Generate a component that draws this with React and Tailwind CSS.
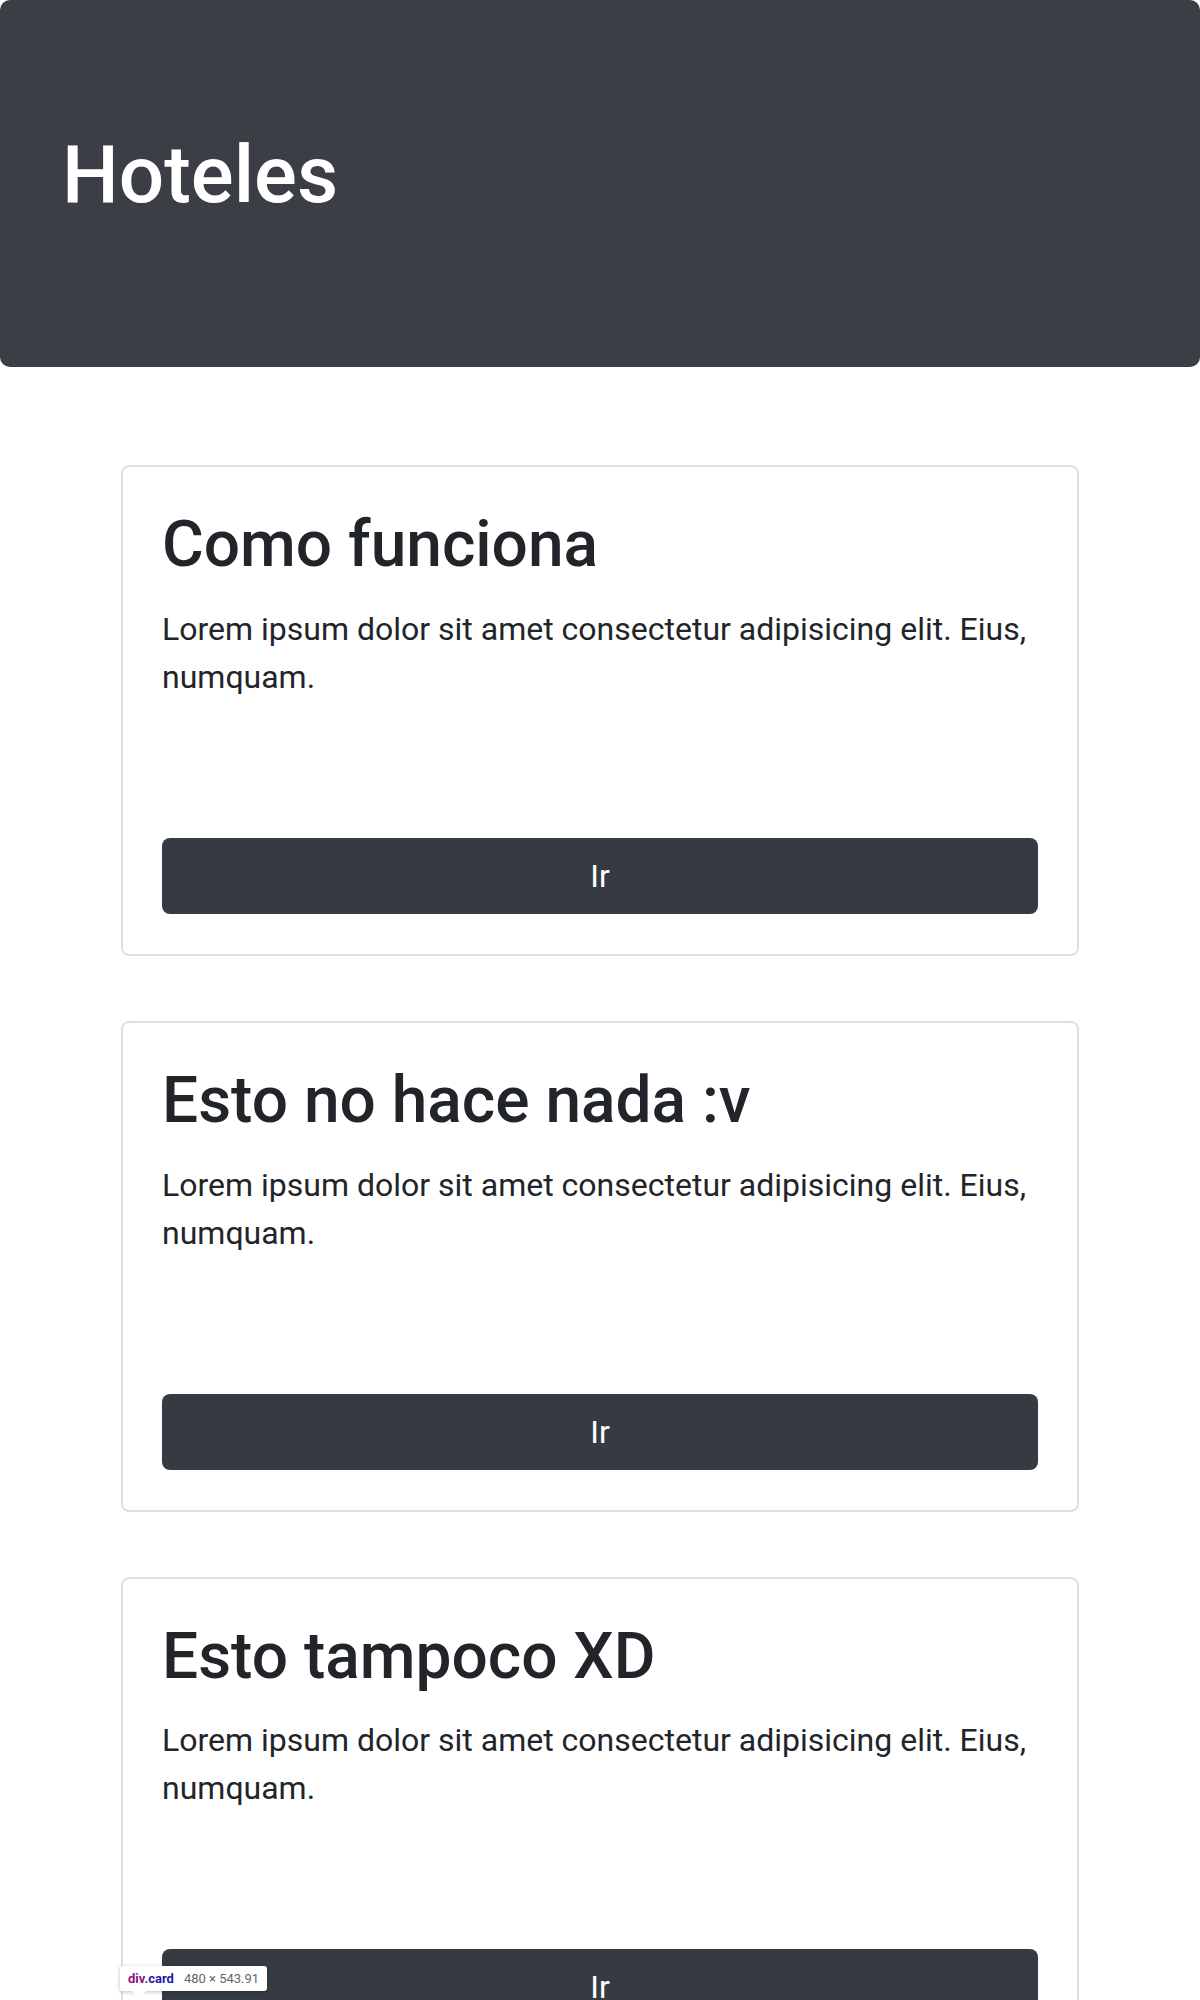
import React from "react";

const cards = [
  "Como funciona",
  "Esto no hace nada :v",
  "Esto tampoco XD",
];

function Card({ title }) {
  return (
    <div className="rounded-[8px] border-2 border-[#dfdfdf] bg-white px-[39px] py-[40px]">
      <h2 className="mb-[21px] text-[64px] font-medium leading-[76.8px] text-[#212529]">
        {title}
      </h2>
      <p className="text-[32px] leading-[48px] text-[#212529]">
        Lorem ipsum dolor sit amet consectetur adipisicing elit. Eius, numquam.
      </p>
      <button className="mt-[137px] flex h-[76px] w-full items-center justify-center rounded-[8px] bg-[#363a42] text-[32px] leading-[48px] text-white">
        Ir
      </button>
    </div>
  );
}

export default function App() {
  return (
    <div className="relative h-[2000px] overflow-hidden bg-white font-['Roboto','Liberation_Sans',sans-serif]">
      <header className="h-[367px] rounded-[10px] bg-[#3b3e44] px-[62px] pt-[127px]">
        <h1 className="text-[80px] font-medium leading-[96px] text-white">Hoteles</h1>
      </header>
      <main className="mx-auto mt-[98px] flex w-[958px] flex-col gap-[65px]">
        {cards.map((t) => (
          <Card key={t} title={t} />
        ))}
      </main>
      <div className="absolute left-[120px] top-[1966px] flex h-[25px] items-center gap-[10px] rounded-[3px] bg-white px-[8px] font-['Roboto',sans-serif] text-[13px] shadow-[0_1px_4px_rgba(0,0,0,0.25)]">
        <span className="font-bold">
          <span className="text-[#881280]">div</span>
          <span className="text-[#1a1aa6]">.card</span>
        </span>
        <span className="text-[#666666]">480 × 543.91</span>
        <span className="absolute left-[12px] top-[25px] h-0 w-0 border-x-[7px] border-t-[7px] border-x-transparent border-t-white"></span>
      </div>
    </div>
  );
}
